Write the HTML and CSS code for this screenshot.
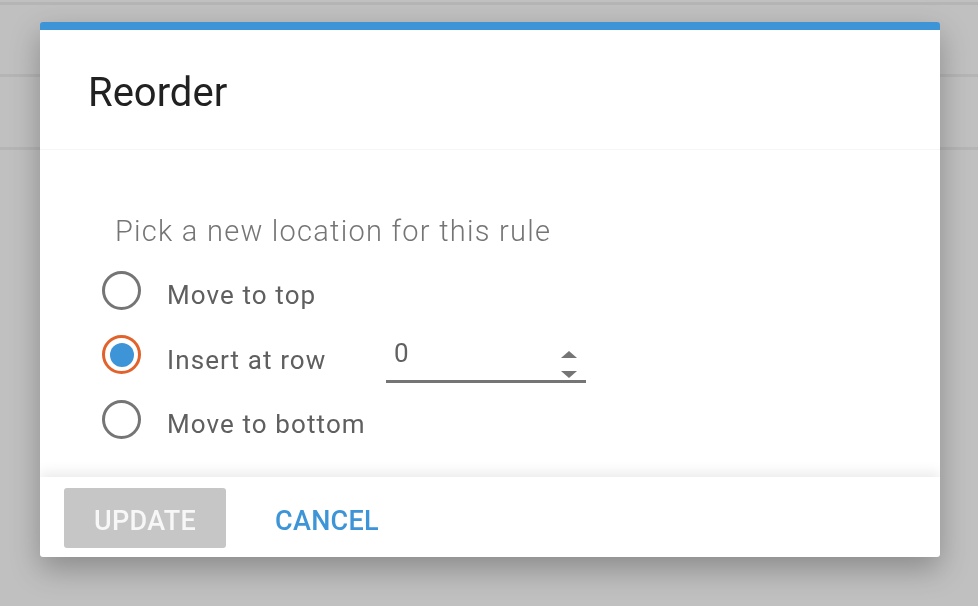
FILE: index.html
```html
<!DOCTYPE html>
<html lang="en">
<head>
    <meta charset="UTF-8">
    <meta name="viewport" content="width=device-width, initial-scale=1.0">
    <title>Reorder</title>
    <link rel="stylesheet" href="styles.css">
</head>
<body>
    <div class="page">
        <div class="row row-first"></div>
        <div class="row"></div>
        <div class="row"></div>
    </div>

    <div class="overlay">
        <div class="dialog">
            <div class="dialog-header">
                <h1>Reorder</h1>
            </div>
            <div class="dialog-body">
                <p class="prompt">Pick a new location for this rule</p>
                <label class="option">
                    <span class="radio"></span>
                    <span class="option-label">Move to top</span>
                </label>
                <label class="option">
                    <span class="radio checked"></span>
                    <span class="option-label wide">Insert at row</span>
                    <span class="number">
                        <span class="number-value">0</span>
                        <span class="spinner">
                            <span class="arrow up"></span>
                            <span class="arrow down"></span>
                        </span>
                    </span>
                </label>
                <label class="option">
                    <span class="radio"></span>
                    <span class="option-label">Move to bottom</span>
                </label>
            </div>
            <div class="dialog-footer">
                <button class="btn btn-disabled">UPDATE</button>
                <button class="btn btn-flat">CANCEL</button>
            </div>
        </div>
    </div>
</body>
</html>
```

FILE: styles.css
```css
body {
    margin: 0;
    font-family: Roboto, "Liberation Sans", sans-serif;
    background-color: #c0c0c0;
    height: 606px;
    overflow: hidden;
}
.page {
    padding-top: 2px;
}
.row {
    height: 70px;
    border-top: 3px solid #b5b5b5;
}
.row-first {
    height: 69px;
}
.overlay {
    position: fixed;
    top: 0;
    left: 0;
    right: 0;
    bottom: 0;
    padding: 22px 38px 0 40px;
}
.dialog {
    width: 900px;
    height: 535px;
    background-color: #fff;
    border-top: 8px solid #3d95d7;
    border-radius: 3px;
    box-sizing: border-box;
    box-shadow: 0 12px 30px rgba(0, 0, 0, 0.28);
    display: flex;
    flex-direction: column;
    overflow: hidden;
}
.dialog-header {
    height: 120px;
    display: flex;
    align-items: center;
    padding-left: 48px;
    border-bottom: 1px solid #f6f6f6;
    box-sizing: border-box;
}
.dialog-header h1 {
    margin: 5px 0 0 0;
    font-size: 40px;
    font-weight: 400;
    color: #212121;
}
.dialog-body {
    flex: 1;
    padding: 61px 0 0 62px;
}
.prompt {
    margin: 0 0 7px 13px;
    font-size: 29px;
    font-weight: 300;
    letter-spacing: 1.25px;
    color: #757575;
    line-height: 40px;
}
.option {
    display: flex;
    align-items: center;
    height: 64px;
}
.option + .option {
    margin-top: 0.5px;
}
.radio {
    width: 39px;
    height: 39px;
    border: 3px solid #757575;
    border-radius: 50%;
    box-sizing: border-box;
    display: flex;
    align-items: center;
    justify-content: center;
}
.radio.checked {
    border-color: #e2622b;
}
.radio.checked::after {
    content: "";
    width: 24px;
    height: 24px;
    border-radius: 50%;
    background-color: #3d95d7;
}
.option-label {
    margin-left: 26px;
    padding-top: 10px;
    font-size: 26px;
    letter-spacing: 1.1px;
    color: #5f5f5f;
}
.option-label.wide {
    width: 219px;
}
.number {
    width: 200px;
    height: 53px;
    border-bottom: 3px solid #757575;
    display: flex;
    align-items: center;
    justify-content: space-between;
}
.number-value {
    margin-left: 8px;
    font-size: 26px;
    color: #616161;
}
.spinner {
    display: flex;
    flex-direction: column;
    gap: 13px;
    margin-right: 9px;
    margin-top: 23px;
}
.arrow {
    width: 0;
    height: 0;
    border-left: 8px solid transparent;
    border-right: 8px solid transparent;
}
.arrow.up {
    border-bottom: 7px solid #757575;
}
.arrow.down {
    border-top: 7px solid #757575;
}
.dialog-footer {
    height: 80px;
    display: flex;
    align-items: center;
    padding: 2px 0 0 24px;
    box-sizing: border-box;
    gap: 21px;
    box-shadow: 0 -5px 12px rgba(0, 0, 0, 0.08);
    position: relative;
}
.btn {
    height: 60px;
    border: none;
    border-radius: 3px;
    font-family: Roboto, "Liberation Sans", sans-serif;
    font-size: 27px;
    font-weight: 500;
    letter-spacing: 0.3px;
    padding: 5px 28px 0 28px;
    background: none;
}
.btn-disabled {
    width: 162px;
    padding: 5px 0 0 0;
    background-color: #c6c6c6;
    color: #f7f7f7;
}
.btn-flat {
    color: #3d95d7;
}
```
